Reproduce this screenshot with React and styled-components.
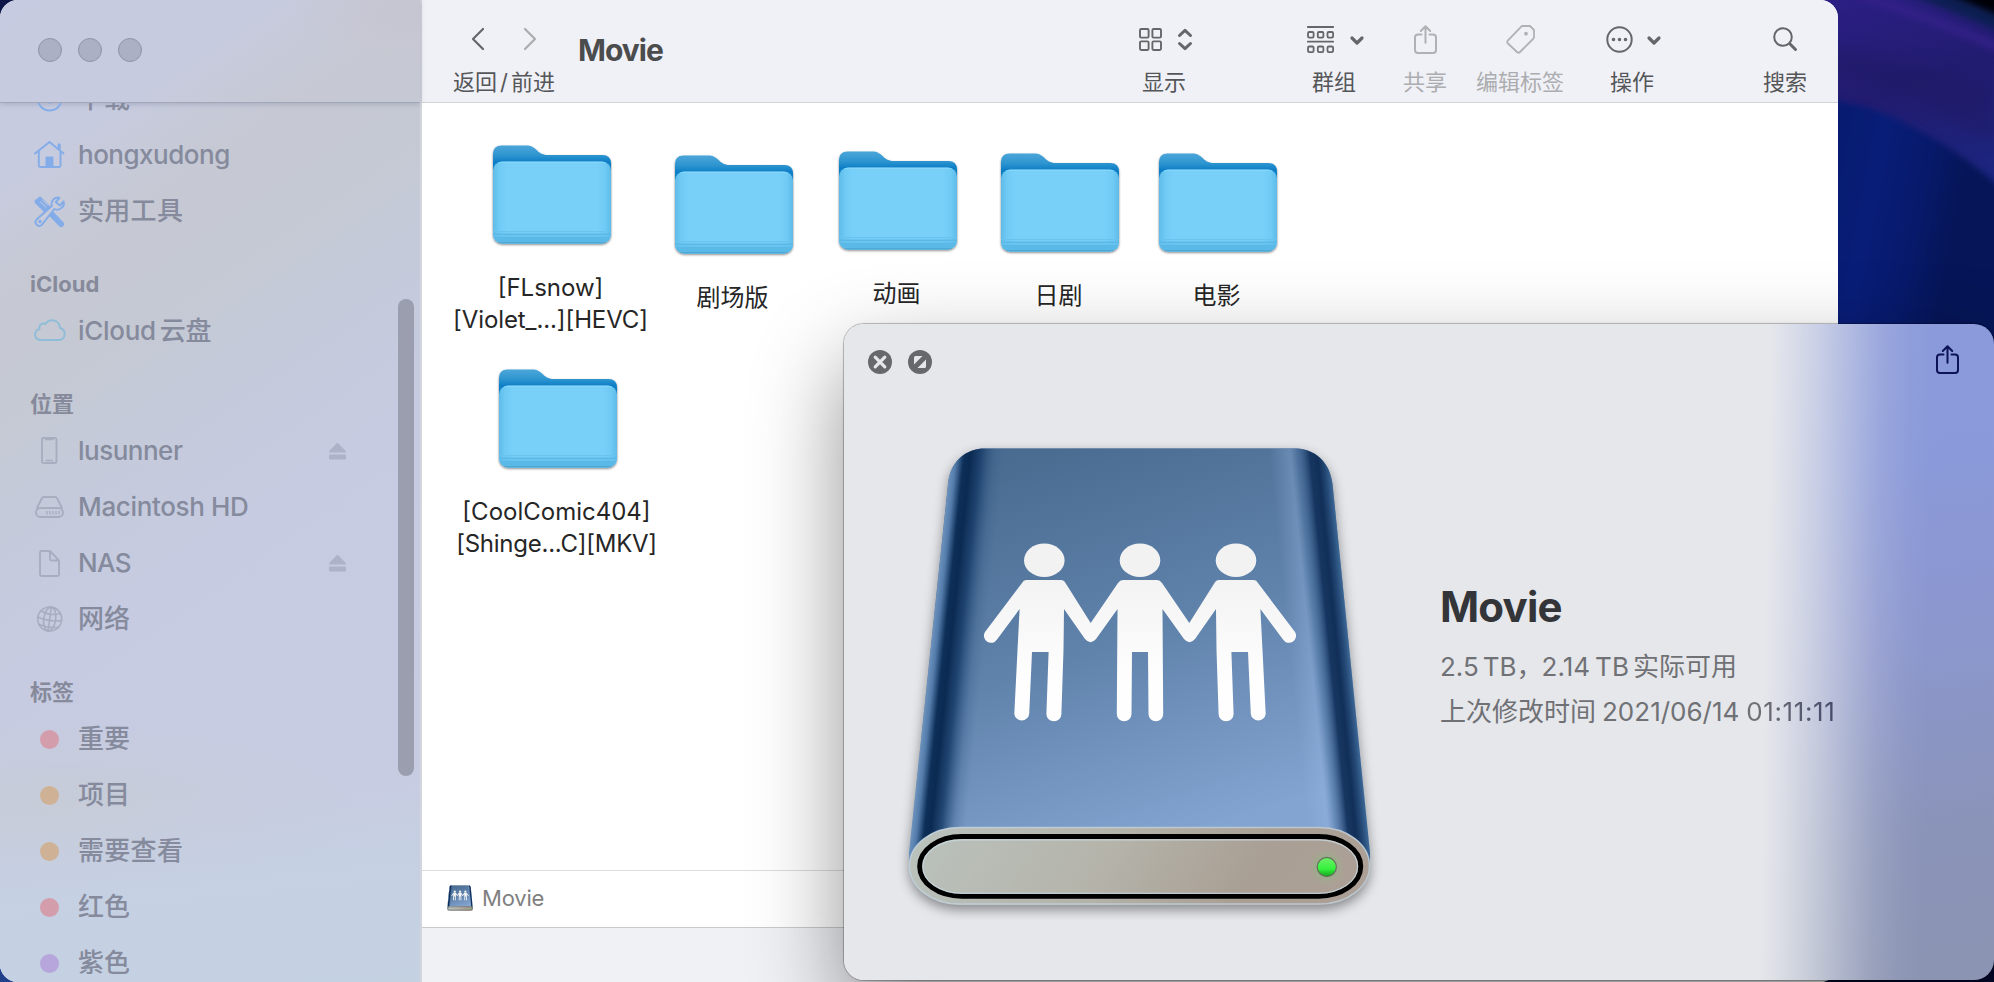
import React from "react";
import styled, { createGlobalStyle, css } from "styled-components";

const GlobalStyle = createGlobalStyle`
  * { box-sizing: border-box; }
  body { margin: 0; background: #0a1458; overflow: hidden; }
`;

const Desktop = styled.div`
  position: relative;
  width: 1994px;
  height: 982px;
  overflow: hidden;
  font-family: Inter, "Noto Sans CJK SC", sans-serif;
  background: linear-gradient(#0d1547, #20408a);
`;

const WallpaperArt = styled.svg`
  position: absolute;
  top: 0;
  right: 0;
`;

const FinderWindow = styled.main`
  position: absolute;
  left: 0;
  top: 0;
  width: 1838px;
  height: 982px;
  display: flex;
  border-radius: 18px;
  overflow: hidden;
  background: #fff;
`;

/* ---------- sidebar ---------- */

const Sidebar = styled.aside`
  position: relative;
  width: 422px;
  flex: none;
  display: flex;
  flex-direction: column;
  border-right: 2px solid #d3d5dc;
  background:
    linear-gradient(174deg, rgba(197, 210, 227, 0) 79%, #c5d1e3 90%, #c4d1e1 100%),
    radial-gradient(ellipse 300px 90px at 60px 815px, rgba(199, 204, 214, 0.9), rgba(199, 204, 214, 0)),
    radial-gradient(ellipse 120px 60px at 410px 10px, rgba(198, 197, 209, 0.9), rgba(198, 197, 209, 0)),
    linear-gradient(146deg, #c6cbe1 0%, #c7cbdf 14%, #c6c9d3 24%, #c5c9d3 33%, #c4cad9 40%, #c6cbe1 54%, #c8cce2 100%);
`;

const WindowControls = styled.div`
  height: 103px;
  flex: none;
  display: flex;
  gap: 16px;
  padding: 38px 0 0 38px;
  border-bottom: 1px solid #a2a8ba;
  box-shadow: 0 1px 5px rgba(90, 100, 130, 0.3);
`;

const ControlDot = styled.span`
  width: 24px;
  height: 24px;
  border-radius: 50%;
  background: #abb0c5;
  border: 1px solid #8f94a8;
`;

const SidebarScroll = styled.div`
  flex: 1;
  min-height: 0;
  overflow: hidden;
`;

const SidebarList = styled.div`
  margin-top: -33px;
`;

const SectionTitle = styled.div`
  height: 64px;
  padding: 32px 0 0 30px;
  font-size: 22px;
  line-height: 28px;
  font-weight: 700;
  letter-spacing: ${(p) => p.$track || 0}px;
  color: #868a9b;
`;

const SidebarRow = styled.div`
  height: 56px;
  display: flex;
  align-items: center;
  padding: 0 74px 0 34px;
  color: #858a9d;
  font-size: 26px;
  font-weight: 500;
`;

const RowIcon = styled.svg`
  width: 32px;
  height: 32px;
  flex: none;
  overflow: visible;
  fill: none;
  stroke: ${(p) => p.$color};
  stroke-width: 1.9;
  stroke-linecap: round;
  stroke-linejoin: round;
`;

const RowLabel = styled.span`
  flex: 1;
  margin-left: 12px;
  padding-top: 2px;
  line-height: 32px;
  white-space: nowrap;
  letter-spacing: ${(p) => p.$track || 0}px;
`;

const TagDot = styled.span`
  width: 19px;
  height: 19px;
  margin: 2px 7px 0 6px;
  border-radius: 50%;
  background: ${(p) => p.$color};
`;

const Eject = styled.svg`
  width: 17px;
  height: 18px;
  margin-top: 2px;
  fill: #adb2c8;
`;

const ScrollThumb = styled.div`
  position: absolute;
  left: 398px;
  top: 299px;
  width: 16px;
  height: 477px;
  border-radius: 8px;
  background: #9b9eaf;
`;

/* ---------- main pane ---------- */

const Pane = styled.section`
  flex: 1;
  min-width: 0;
  display: flex;
  flex-direction: column;
`;

const Toolbar = styled.header`
  height: 103px;
  flex: none;
  display: flex;
  padding-right: 30px;
  background: #f0f1f6;
  border-bottom: 1px solid #d4d5d8;
`;

const ToolItem = styled.div`
  width: ${(p) => p.$width}px;
  margin-left: ${(p) => p.$before || 0}px;
  display: flex;
  flex-direction: column;
  align-items: center;
  color: ${(p) => (p.$disabled ? "#b0b1b5" : "#65666a")};
`;

const ToolGlyphs = styled.div`
  height: 67px;
  padding: 12px ${(p) => p.$after || 0}px 1px 0;
  display: flex;
  align-items: center;
  justify-content: center;
  gap: ${(p) => p.$gap || 0}px;
`;

const ToolLabel = styled.div`
  margin-left: -2px;
  font-size: 22px;
  line-height: 30px;
  white-space: nowrap;
  color: ${(p) => (p.$disabled ? "#acadb0" : "#555659")};
`;

const Slash = styled.span`
  margin: 0 3px;
`;

const Glyph = styled.svg`
  flex: none;
  overflow: visible;
  fill: none;
  stroke: currentColor;
  stroke-width: ${(p) => p.$weight || 2};
  stroke-linecap: round;
  stroke-linejoin: round;
  opacity: ${(p) => p.$opacity || 1};
`;

const PaneTitle = styled.h1`
  flex: 1;
  margin: 30px 0 0 21px;
  font-size: 30px;
  line-height: 40px;
  font-weight: 700;
  letter-spacing: -1px;
  color: #4b4c4e;
`;

const IconCanvas = styled.div`
  position: relative;
  flex: 1;
`;

const FileItem = styled.div`
  position: absolute;
  left: ${(p) => p.$x - 542}px;
  top: ${(p) => p.$y - 103}px;
  width: 240px;
  display: flex;
  flex-direction: column;
  align-items: center;
`;

const FileName = styled.div`
  margin-top: 22px;
  margin-right: 3px;
  text-align: center;
  font-size: 24px;
  line-height: 32px;
  color: #262626;
  white-space: nowrap;
`;

const NameLine = styled.div`
  letter-spacing: ${(p) => p.$track || 0}px;
`;

const PathBar = styled.div`
  height: 57px;
  flex: none;
  display: flex;
  align-items: center;
  gap: 9px;
  padding: 0 0 2px 25px;
  border-top: 1px solid #dcdcde;
  font-size: 22px;
  letter-spacing: -0.2px;
  color: #7f7f81;
`;

const StatusBar = styled.div`
  height: 55px;
  flex: none;
  background: #f0f1f5;
  border-top: 1px solid #c9cacd;
`;

/* ---------- preview panel ---------- */

const PreviewPanel = styled.section`
  position: absolute;
  left: 844px;
  top: 324px;
  width: 1150px;
  height: 656px;
  border-radius: 20px;
  display: flex;
  flex-direction: column;
  background:
    linear-gradient(91deg,
      #e5e7eb 926px,
      rgba(229, 231, 235, 0.88) 948px,
      rgba(229, 231, 235, 0.66) 978px,
      rgba(229, 231, 235, 0.34) 1016px,
      rgba(229, 231, 235, 0.16) 1040px,
      rgba(229, 231, 235, 0.04) 1068px,
      rgba(229, 231, 235, 0) 1090px),
    linear-gradient(172deg, #8c9bdb 0%, #8a99d9 35%, #8c97cf 55%, #8a94b8 82%, #8b94b2 100%);
  box-shadow: 0 0 0 1px rgba(0, 0, 0, 0.2), 0 0 3px rgba(0, 0, 0, 0.15), 0 38px 90px rgba(0, 0, 0, 0.43);
`;

const PanelHeader = styled.div`
  height: 76px;
  flex: none;
  display: flex;
  align-items: flex-start;
  gap: 16px;
  padding: 26px 35px 0 24px;
`;

const Spacer = styled.div`
  flex: 1;
`;

const ShareSlot = styled.div`
  margin-top: -5px;
  color: #0c1356;
`;

const PanelBody = styled.div`
  display: flex;
  padding: 30px 0 0 51px;
`;

const Details = styled.div`
  margin: 151px 0 0 55px;
`;

const VolumeName = styled.h2`
  margin: 0 0 11px;
  font-size: 42px;
  line-height: 52px;
  font-weight: 700;
  letter-spacing: -0.8px;
  color: #343538;
`;

const DetailLine = styled.div`
  height: 45px;
  display: flex;
  align-items: center;
  font-size: 26px;
  line-height: 45px;
  white-space: nowrap;
  color: #707175;
`;

const Run = styled.span`
  letter-spacing: ${(p) => p.$track || 0}px;
  margin-left: ${(p) => p.$before || 0}px;
  ${(p) =>
    p.$fade &&
    css`
      background: linear-gradient(to right, #707175 10%, #444b6b 100%);
      background-clip: text;
      -webkit-background-clip: text;
      color: transparent;
    `}
`;

/* ---------- drawings ---------- */

const Wallpaper = () => (
  <WallpaperArt width="200" height="982" viewBox="1794 0 200 982">
    <defs>
      <linearGradient id="wpUpper" x1="0" y1="0" x2="0.3" y2="1">
        <stop offset="0" stopColor="#2c1f86" />
        <stop offset="0.5" stopColor="#221c70" />
        <stop offset="1" stopColor="#1b2680" />
      </linearGradient>
      <linearGradient id="wpLower" x1="1838" y1="0" x2="1994" y2="30" gradientUnits="userSpaceOnUse">
        <stop offset="0" stopColor="#071a6c" />
        <stop offset="0.45" stopColor="#081d78" />
        <stop offset="0.75" stopColor="#07196a" />
        <stop offset="1" stopColor="#061557" />
      </linearGradient>
      <filter id="wpSoft" x="-20%" y="-20%" width="140%" height="140%" colorInterpolationFilters="sRGB">
        <feGaussianBlur stdDeviation="3" />
      </filter>
      <filter id="wpSofter" x="-20%" y="-50%" width="140%" height="200%" colorInterpolationFilters="sRGB">
        <feGaussianBlur stdDeviation="8" />
      </filter>
    </defs>
    <rect x="1794" width="200" height="230" fill="url(#wpUpper)" />
    <path d="M1794 40 L1994 80 V140 L1900 95 L1794 65Z" fill="#201a66" opacity=".6" filter="url(#wpSofter)" />
    <path d="M1856 -6 Q1930 18 2000 48" stroke="#35218a" strokeWidth="9" fill="none" opacity=".8" filter="url(#wpSoft)" />
    <path d="M1895 -10 Q1950 10 2000 32 V-10Z" fill="#0d1f52" filter="url(#wpSoft)" />
    <path d="M1940 -10 L2000 16 V-10Z" fill="#000008" filter="url(#wpSoft)" />
    <path d="M1794 96 Q1860 98 1910 126 Q1960 150 2010 196 V982 H1794Z" fill="url(#wpLower)" filter="url(#wpSoft)" />
    <rect x="1794" y="900" width="200" height="82" fill="#03082c" />
  </WallpaperArt>
);

const Folder = ({ id }) => (
  <svg width="124" height="106" viewBox="-3 -1 124 106">
    <defs>
      <linearGradient id={`${id}b`} x1="0" y1="0" x2="0" y2="22" gradientUnits="userSpaceOnUse">
        <stop offset="0.1" stopColor="#47a3d8" />
        <stop offset="0.5" stopColor="#2b93cf" />
        <stop offset="0.75" stopColor="#0f7fc6" />
      </linearGradient>
      <linearGradient id={`${id}f`} x1="0" y1="0" x2="1" y2="0">
        <stop offset="0" stopColor="#5ebbe8" />
        <stop offset="0.05" stopColor="#6fcaf4" />
        <stop offset="0.12" stopColor="#78d0f9" />
        <stop offset="0.88" stopColor="#78d0f9" />
        <stop offset="0.95" stopColor="#6fcaf4" />
        <stop offset="1" stopColor="#5ebbe8" />
      </linearGradient>
      <filter id={`${id}s`} x="-10%" y="-10%" width="120%" height="125%">
        <feDropShadow dx="0" dy="1.2" stdDeviation="1.2" floodColor="#000" floodOpacity="0.5" />
      </filter>
      <clipPath id={`${id}c`}>
        <rect y="16.5" width="118" height="82" rx="9" />
      </clipPath>
    </defs>
    <g filter={`url(#${id}s)`}>
      <path
        d="M0 9 Q0 0.5 8.5 0.5 H33 C38 0.5 40 2 43 4.500 C46 7.500 49 10 55 10 H109.500 Q118 10 118 18.500 V90 H0Z"
        fill={`url(#${id}b)`}
      />
      <rect y="16.500" width="118" height="82" rx="9" fill={`url(#${id}f)`} />
    </g>
    <g clipPath={`url(#${id}c)`}>
      <rect y="16.500" width="118" height="1.200" fill="#8bd9fb" />
      <rect y="86" width="118" height="1.200" fill="#69c3ee" />
      <rect y="88.500" width="118" height="2" fill="#5bb8e6" />
      <rect y="90.500" width="118" height="1" fill="#6fc8f1" />
      <rect y="91.500" width="118" height="8" fill="#5bb9e8" />
      <rect y="97.300" width="118" height="1.500" fill="#4aa3d1" />
    </g>
  </svg>
);

const halfFigures =
  "M1026 580 H1061 Q1064 580 1065.500 583 L1090.700 623 L1118 583 Q1120 580 1123 580 H1141 V652 H1132 L1131.500 714 A7.300 7.300 0 0 1 1116.800 714 L1117.500 609 L1096 639 Q1090.500 645.500 1085 639 L1064 609 L1063.500 650 L1061.400 714 A7.500 7.300 0 0 1 1046.400 714 L1048.600 652 H1032 L1029.200 714 A7.500 7.300 0 0 1 1014.300 714 L1017.500 650 L1019.600 609 L997 639.500 A7 7 0 0 1 985 632 L1022 583 Q1023.500 580 1026 580Z";

const NetworkDrive = ({ id, size, viewBox }) => (
  <svg width={size} height={size} viewBox={viewBox}>
    <defs>
      <linearGradient id={`${id}body`} x1="1050" y1="448" x2="1180" y2="840" gradientUnits="userSpaceOnUse">
        <stop offset="0" stopColor="#4a6c91" />
        <stop offset="0.5" stopColor="#6083ac" />
        <stop offset="1" stopColor="#83a4d0" />
      </linearGradient>
      <linearGradient id={`${id}left`} x1="0" y1="0" x2="54" y2="0" gradientUnits="userSpaceOnUse">
        <stop offset="0" stopColor="#6d93bd" />
        <stop offset="0.1" stopColor="#547cab" />
        <stop offset="0.24" stopColor="#0d2f58" />
        <stop offset="0.36" stopColor="#0a2a52" />
        <stop offset="0.55" stopColor="#163b67" stopOpacity="0.85" />
        <stop offset="0.8" stopColor="#2c5380" stopOpacity="0.25" />
        <stop offset="1" stopColor="#3d6590" stopOpacity="0" />
      </linearGradient>
      <linearGradient id={`${id}right`} x1="0" y1="0" x2="-60" y2="0" gradientUnits="userSpaceOnUse">
        <stop offset="0" stopColor="#3d6896" />
        <stop offset="0.1" stopColor="#234774" />
        <stop offset="0.2" stopColor="#112f58" />
        <stop offset="0.33" stopColor="#14345f" stopOpacity="0.97" />
        <stop offset="0.54" stopColor="#456d9c" stopOpacity="0.4" />
        <stop offset="0.66" stopColor="#9dbce8" stopOpacity="0.3" />
        <stop offset="1" stopColor="#9dbce8" stopOpacity="0" />
      </linearGradient>
      <linearGradient id={`${id}metal`} x1="0" y1="0" x2="1" y2="0.1">
        <stop offset="0" stopColor="#bac3bd" />
        <stop offset="0.45" stopColor="#b5b4ab" />
        <stop offset="0.8" stopColor="#a99f94" />
        <stop offset="1" stopColor="#aca096" />
      </linearGradient>
      <linearGradient id={`${id}led`} x1="0" y1="0" x2="0" y2="1">
        <stop offset="0.2" stopColor="#5df05c" />
        <stop offset="0.6" stopColor="#33f23c" />
        <stop offset="1" stopColor="#13a01c" />
      </linearGradient>
      <linearGradient id={`${id}men`} x1="0" y1="580" x2="0" y2="680" gradientUnits="userSpaceOnUse">
        <stop offset="0" stopColor="#f3f3f4" />
        <stop offset="1" stopColor="#fefefe" />
      </linearGradient>
      <clipPath id={`${id}clip`}>
        <path d="M988 448 H1292 C1315 448 1330 462 1332.500 484 L1370 853 V870 H909 V853 L948 484 C950 462 965 448 988 448Z" />
      </clipPath>
      <filter id={`${id}shadow`} x="-10%" y="-10%" width="120%" height="120%" colorInterpolationFilters="sRGB">
        <feDropShadow dx="0" dy="5" stdDeviation="6" floodColor="#000" floodOpacity="0.4" />
      </filter>
      <filter id={`${id}glow`} x="-100%" y="-100%" width="300%" height="300%">
        <feGaussianBlur stdDeviation="4" />
      </filter>
    </defs>
    <g filter={`url(#${id}shadow)`}>
      <g clipPath={`url(#${id}clip)`}>
        <rect x="900" y="440" width="480" height="430" fill={`url(#${id}body)`} />
        <g transform="translate(948 484) skewX(-6.03)">
          <rect y="-40" width="54" height="430" fill={`url(#${id}left)`} />
        </g>
        <g transform="translate(1332.500 484) skewX(5.8)">
          <rect x="-60" y="-40" width="62" height="430" fill={`url(#${id}right)`} />
        </g>
        <rect x="940" y="447.500" width="400" height="1.500" fill="#8299b2" opacity=".7" />
      </g>
      <rect x="909" y="827" width="461" height="78" rx="50" ry="39" fill={`url(#${id}metal)`} />
    </g>
    <rect x="909.500" y="827.500" width="460" height="76.500" rx="50" ry="38" fill="none" stroke="#c1d3e2" strokeWidth="1.500" opacity=".75" />
    <rect x="919.700" y="836.500" width="441" height="59.700" rx="42" ry="29.800" fill="none" stroke="#000" strokeWidth="5" />
    <rect x="922.800" y="839.800" width="434.800" height="53.500" rx="39" ry="26.500" fill="none" stroke="#cbdbe4" strokeWidth="1.200" opacity=".8" />
    <circle cx="1326.800" cy="867" r="11" fill="#5fe060" opacity=".4" filter={`url(#${id}glow)`} />
    <circle cx="1326.800" cy="867" r="9.600" fill={`url(#${id}led)`} stroke="#68705f" strokeWidth="1.200" />
    <g fill={`url(#${id}men)`}>
      <path d={halfFigures} />
      <path d={halfFigures} transform="translate(2280 0) scale(-1 1)" />
    </g>
    <g fill="#f2f2f3">
      <ellipse cx="1044.300" cy="560.300" rx="20.300" ry="16.700" />
      <ellipse cx="1140" cy="560.300" rx="20.300" ry="16.700" />
      <ellipse cx="1236" cy="560.300" rx="20.300" ry="16.700" />
    </g>
  </svg>
);

const ShareGlyph = () => (
  <Glyph width="23" height="29" viewBox="0 0 23 29" $weight={2}>
    <path d="M7.500 9.500 H4 Q1 9.500 1 12.500 V25 Q1 28 4 28 H19 Q22 28 22 25 V12.500 Q22 9.500 19 9.500 H15.500 M11.500 17.800 V1.500 M6.800 6 L11.500 1.200 L16.200 6" />
  </Glyph>
);

const ChevronDown = () => (
  <Glyph width="14" height="9" viewBox="0 0 14 9" $weight={3.2}>
    <path d="M2 3 L7 8 L12 3" />
  </Glyph>
);

const blue = "#83ace9";
const grey = "#a8adc0";

const icons = {
  download: (
    <RowIcon viewBox="0 0 32 32" $color={blue}>
      <circle cx="15.700" cy="16.500" r="12" />
      <path d="M15.700 9 V19 M12 17 L15.700 21 L19.400 17Z" fill={blue} />
    </RowIcon>
  ),
  home: (
    <RowIcon viewBox="0 0 32 32" $color={blue}>
      <path d="M1 15.500 L15.500 4 L29.500 15.500 M4.800 13 V27.500 Q4.800 29 6.300 29 H25 Q26.500 29 26.500 27.500 V13 M25.200 7 V11" />
      <path d="M12.500 19.500 H18.500 V29 H12.500Z" fill={blue} />
      <path d="M25.200 6.800 V10.500" strokeWidth="3" />
    </RowIcon>
  ),
  tools: (
    <RowIcon viewBox="0 0 32 32" $color={blue}>
      <path d="M1.500 7 L6 3.500 L15.500 13 L11 17.500 L1.800 8.500Z" fill={blue} />
      <path d="M6.500 8 L12 13.300 M9 6.500 L13.500 11" stroke="#c7cbda" strokeWidth="1" />
      <path d="M17.500 20 L27 30" strokeWidth="6" />
      <path d="M15 17 L19 21" strokeWidth="2.500" />
      <path d="M25.500 3.800 C21 2.500 16.500 6.500 17.800 12 L2.500 25.500 C-0.500 29 4 34 8 30.700 L20.300 15 C26 17.500 31.200 12 29.600 7.500 L25.800 11.500 L21.800 8Z" fill="#c7cbda" />
      <circle cx="6" cy="27.500" r="0.800" />
    </RowIcon>
  ),
  cloud: (
    <RowIcon viewBox="0 0 32 32" $color="#8fbcd8">
      <path d="M7.500 26 C-0.500 26 -0.800 16.500 5.500 15 C4.500 10.500 8.500 8.500 11.500 10 C14.500 4.500 25 4.500 26 14 C32.500 15.500 32 26 25 26Z" />
    </RowIcon>
  ),
  phone: (
    <RowIcon viewBox="0 0 32 32" $color={grey}>
      <rect x="8" y="4" width="14.500" height="25" rx="1.800" />
      <path d="M11.500 5.500 H19 M12 26.500 H18.500" strokeWidth="1.300" />
    </RowIcon>
  ),
  disk: (
    <RowIcon viewBox="0 0 32 32" $color={grey}>
      <path d="M3 18 L7.800 8.500 Q8.500 7 10 7 H21 Q22.500 7 23.200 8.500 L28 18" />
      <rect x="2" y="18" width="27" height="9" rx="4.500" />
      <path d="M13 21 V24.500 M16 21 V24.500 M19 21 V24.500 M22 21 V24.500 M25 21 V24.500" strokeWidth="1.400" strokeLinecap="butt" />
    </RowIcon>
  ),
  doc: (
    <RowIcon viewBox="0 0 32 32" $color={grey}>
      <path d="M16 5 H7.500 Q6 5 6 6.500 V28.500 Q6 30 7.500 30 H23.500 Q25 30 25 28.500 V14.500Z M16 5 V13 Q16 14.500 17.500 14.500 H25" />
    </RowIcon>
  ),
  globe: (
    <RowIcon viewBox="0 0 32 32" $color={grey}>
      <g transform="rotate(8 15.700 17)" strokeWidth="1.600">
        <circle cx="15.700" cy="17" r="12" />
        <ellipse cx="15.700" cy="17" rx="6" ry="12" />
        <path d="M15.700 5 V29 M3.700 17 Q15.700 20 27.700 17 M6 10 Q15.700 14.500 25.500 10 M6 24 Q15.700 26.500 25.500 24" />
      </g>
    </RowIcon>
  ),
};

const sections = [
  {
    rows: [
      { icon: "download", label: "下载" },
      { icon: "home", label: "hongxudong", track: -0.5 },
      { icon: "tools", label: "实用工具", track: 0.3 },
    ],
  },
  { title: "iCloud", rows: [{ icon: "cloud", label: "iCloud", suffix: "云盘", track: -0.3 }] },
  {
    title: "位置",
    rows: [
      { icon: "phone", label: "lusunner", track: -0.5, eject: true },
      { icon: "disk", label: "Macintosh HD", track: -0.35 },
      { icon: "doc", label: "NAS", track: -0.6, eject: true },
      { icon: "globe", label: "网络" },
    ],
  },
  {
    title: "标签",
    rows: [
      { tag: "#d49dac", label: "重要" },
      { tag: "#cfb296", label: "项目" },
      { tag: "#cfb296", label: "需要查看", track: 0.3 },
      { tag: "#d49dac", label: "红色" },
      { tag: "#b6a6dc", label: "紫色" },
    ],
  },
];

const files = [
  { x: 552, y: 144, lines: [{ text: "[FLsnow]" }, { text: "[Violet_...][HEVC]", track: -0.1 }] },
  { x: 734, y: 154, lines: [{ text: "剧场版" }] },
  { x: 898, y: 150, lines: [{ text: "动画" }] },
  { x: 1060, y: 152, lines: [{ text: "日剧" }] },
  { x: 1218, y: 152, lines: [{ text: "电影" }] },
  { x: 558, y: 368, lines: [{ text: "[CoolComic404]" }, { text: "[Shinge...C][MKV]", track: -0.25 }] },
];

const Suffix = styled.span`
  margin-left: 4px;
`;

export default function App() {
  return (
    <Desktop>
      <GlobalStyle />
      <Wallpaper />
      <FinderWindow>
        <Sidebar>
          <WindowControls>
            <ControlDot />
            <ControlDot />
            <ControlDot />
          </WindowControls>
          <SidebarScroll>
            <SidebarList>
              {sections.map((section, i) => (
                <div key={i}>
                  {section.title && <SectionTitle>{section.title}</SectionTitle>}
                  {section.rows.map((row) => (
                    <SidebarRow key={row.label}>
                      {row.tag ? <TagDot $color={row.tag} /> : icons[row.icon]}
                      <RowLabel $track={row.track}>
                        {row.label}
                        {row.suffix && <Suffix>{row.suffix}</Suffix>}
                      </RowLabel>
                      {row.eject && (
                        <Eject viewBox="0 0 17 18">
                          <path d="M8.500 0.500 L16.800 9 Q17 10.500 16 10.500 H1 Q0 10.500 0.200 9Z" />
                          <rect y="12.500" width="17" height="5" rx="1" />
                        </Eject>
                      )}
                    </SidebarRow>
                  ))}
                </div>
              ))}
            </SidebarList>
          </SidebarScroll>
          <ScrollThumb />
        </Sidebar>

        <Pane>
          <Toolbar>
            <ToolItem $width={104} $before={31}>
              <ToolGlyphs $gap={40} $after={3}>
                <Glyph width="12" height="22" viewBox="0 0 12 22" $weight={2.2}>
                  <path d="M11 1 L1 11 L11 21" />
                </Glyph>
                <Glyph width="12" height="22" viewBox="0 0 12 22" $weight={2.2} $opacity={0.5}>
                  <path d="M1 1 L11 11 L1 21" />
                </Glyph>
              </ToolGlyphs>
              <ToolLabel>
                返回<Slash>/</Slash>前进
              </ToolLabel>
            </ToolItem>
            <PaneTitle>Movie</PaneTitle>
            <ToolItem $width={60}>
              <ToolGlyphs $gap={16}>
                <Glyph width="23" height="23" viewBox="0 0 23 23" $weight={1.9}>
                  <rect x="1" y="1" width="8.600" height="8.600" rx="1.200" />
                  <rect x="13.400" y="1" width="8.600" height="8.600" rx="1.200" />
                  <rect x="1" y="13.400" width="8.600" height="8.600" rx="1.200" />
                  <rect x="13.400" y="13.400" width="8.600" height="8.600" rx="1.200" />
                </Glyph>
                <Glyph width="14" height="22" viewBox="0 0 14 22" $weight={3}>
                  <path d="M1.500 7.500 L7 2.300 L12.500 7.500 M1.500 15.500 L7 20.700 L12.500 15.500" />
                </Glyph>
              </ToolGlyphs>
              <ToolLabel>显示</ToolLabel>
            </ToolItem>
            <ToolItem $width={60} $before={110}>
              <ToolGlyphs $gap={16}>
                <Glyph width="27" height="27" viewBox="0 0 27 27" $weight={1.8}>
                  <path d="M0.800 1 H26.200 M0.800 15.700 H26.200" />
                  <rect x="1" y="6" width="5.600" height="5.600" rx="1.300" />
                  <rect x="10.800" y="6" width="5.600" height="5.600" rx="1.300" />
                  <rect x="20.500" y="6" width="5.600" height="5.600" rx="1.300" />
                  <rect x="1" y="20.500" width="5.600" height="5.600" rx="1.300" />
                  <rect x="10.800" y="20.500" width="5.600" height="5.600" rx="1.300" />
                  <rect x="20.500" y="20.500" width="5.600" height="5.600" rx="1.300" />
                </Glyph>
                <ChevronDown />
              </ToolGlyphs>
              <ToolLabel>群组</ToolLabel>
            </ToolItem>
            <ToolItem $width={44} $before={39} $disabled>
              <ToolGlyphs $after={2}>
                <ShareGlyph />
              </ToolGlyphs>
              <ToolLabel $disabled>共享</ToolLabel>
            </ToolItem>
            <ToolItem $width={88} $before={29} $disabled>
              <ToolGlyphs $after={2}>
                <Glyph width="29" height="29" viewBox="0 0 29 29" $weight={1.8}>
                  <path d="M16.500 1 H24 L28 5 V12 Q28 13 27 14 L14 27 Q12.500 28.500 11 27 L2 18.500 Q0.500 17 2 15.300 L15 1.900 Q15.700 1 16.500 1Z" />
                  <circle cx="20" cy="8.700" r="1" fill="currentColor" />
                </Glyph>
              </ToolGlyphs>
              <ToolLabel $disabled>编辑标签</ToolLabel>
            </ToolItem>
            <ToolItem $width={60} $before={38}>
              <ToolGlyphs $gap={14}>
                <Glyph width="27" height="27" viewBox="0 0 27 27" $weight={2}>
                  <circle cx="13.500" cy="13.500" r="12.200" />
                  <path d="M7.500 13.500 h.01 M13.500 13.500 h.01 M19.500 13.500 h.01" strokeWidth="3.600" />
                </Glyph>
                <ChevronDown />
              </ToolGlyphs>
              <ToolLabel>操作</ToolLabel>
            </ToolItem>
            <ToolItem $width={44} $before={101}>
              <ToolGlyphs $after={2}>
                <Glyph width="24" height="24" viewBox="0 0 24 24" $weight={2}>
                  <circle cx="10" cy="10" r="8.800" />
                  <path d="M16.800 16.800 L22.500 22.500" strokeWidth="3" />
                </Glyph>
              </ToolGlyphs>
              <ToolLabel>搜索</ToolLabel>
            </ToolItem>
          </Toolbar>

          <IconCanvas>
            {files.map((f, i) => (
              <FileItem key={i} $x={f.x} $y={f.y}>
                <Folder id={`folder${i}`} />
                <FileName>
                  {f.lines.map((line) => (
                    <NameLine key={line.text} $track={line.track}>
                      {line.text}
                    </NameLine>
                  ))}
                </FileName>
              </FileItem>
            ))}
          </IconCanvas>
          <PathBar>
            <NetworkDrive id="small" size={26} viewBox="905 444 468 468" />
            Movie
          </PathBar>
          <StatusBar />
        </Pane>
      </FinderWindow>

      <PreviewPanel>
        <PanelHeader>
          <svg width="24" height="24" viewBox="0 0 24 24">
            <circle cx="12" cy="12" r="12" fill="#67686b" />
            <path d="M7.200 7.200 L16.800 16.800 M16.800 7.200 L7.200 16.800" stroke="#e5e7eb" strokeWidth="3.200" strokeLinecap="round" />
          </svg>
          <svg width="24" height="24" viewBox="0 0 24 24">
            <circle cx="12" cy="12" r="12" fill="#67686b" />
            <path d="M6 7.500 Q6 6 7.500 6 H14.500 L6 14.500Z M18 9.500 V16.500 Q18 18 16.500 18 H9.500Z" fill="#e5e7eb" />
          </svg>
          <Spacer />
          <ShareSlot>
            <ShareGlyph />
          </ShareSlot>
        </PanelHeader>
        <PanelBody>
          <NetworkDrive id="large" size={490} viewBox="895 430 490 490" />
          <Details>
            <VolumeName>Movie</VolumeName>
            <DetailLine>
              <Run>2.5</Run>
              <Run $before={4}>TB</Run>
              <Run>，</Run>
              <Run $before={-1}>2.14</Run>
              <Run $before={5}>TB</Run>
              <Run $before={4}>实际可用</Run>
            </DetailLine>
            <DetailLine>
              <Run>上次修改时间</Run>
              <Run $before={6}>2021/06/14</Run>
              <Run $before={7} $track={0.6} $fade>01:11:11</Run>
            </DetailLine>
          </Details>
        </PanelBody>
      </PreviewPanel>
    </Desktop>
  );
}
